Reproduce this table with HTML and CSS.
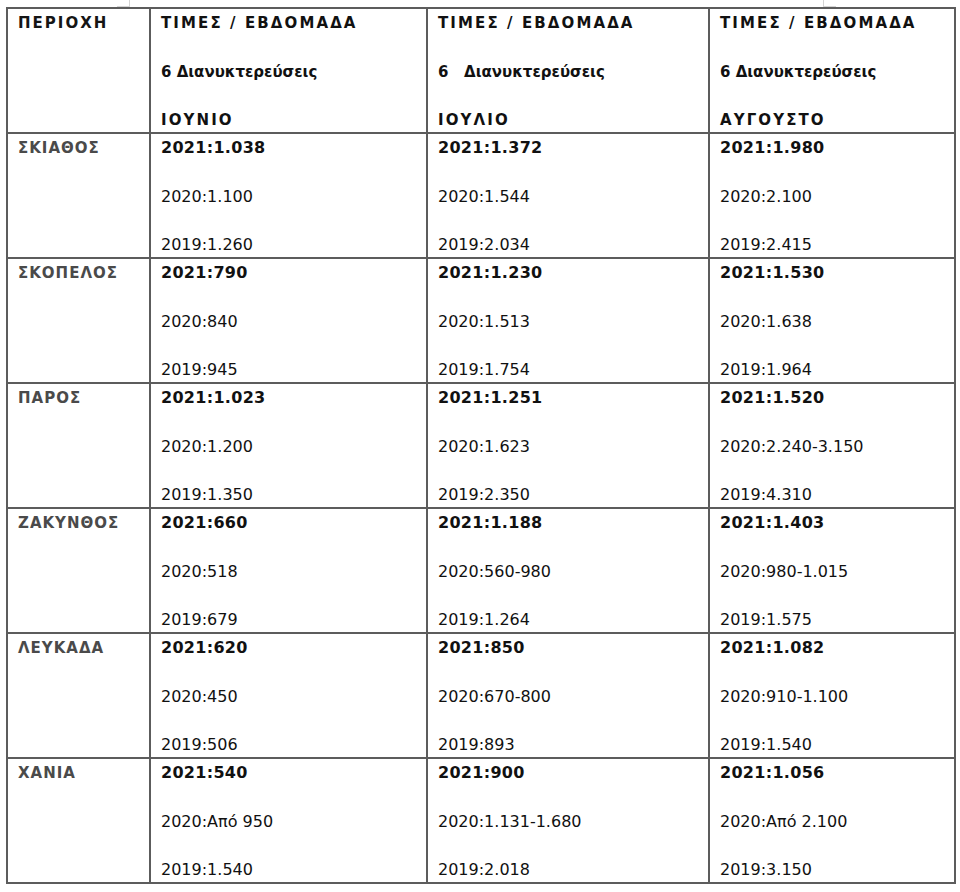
FILE: index.html
```html
<!DOCTYPE html>
<html lang="el">
<head>
<meta charset="utf-8">
<title>Τιμές ανά εβδομάδα</title>
<link rel="stylesheet" href="styles.css">
</head>
<body>
<div class="page">
  <span class="mark mark-left"></span>
  <span class="mark mark-right"></span>
  <table class="prices">
    <colgroup>
      <col class="c-area">
      <col class="c-jun">
      <col class="c-jul">
      <col class="c-aug">
    </colgroup>
    <thead>
      <tr>
        <th class="area head-area"><div class="ln">ΠΕΡΙΟΧΗ</div></th>
        <th><div class="ln caps">ΤΙΜΕΣ / ΕΒΔΟΜΑΔΑ</div><div class="ln">6 Διανυκτερεύσεις</div><div class="ln caps">ΙΟΥΝΙΟ</div></th>
        <th><div class="ln caps">ΤΙΜΕΣ / ΕΒΔΟΜΑΔΑ</div><div class="ln">6&nbsp;&nbsp; Διανυκτερεύσεις</div><div class="ln caps">ΙΟΥΛΙΟ</div></th>
        <th><div class="ln caps">ΤΙΜΕΣ / ΕΒΔΟΜΑΔΑ</div><div class="ln">6 Διανυκτερεύσεις</div><div class="ln caps">ΑΥΓΟΥΣΤΟ</div></th>
      </tr>
    </thead>
    <tbody>
      <tr>
        <td class="area"><div class="ln">ΣΚΙΑΘΟΣ</div></td>
        <td><div class="ln now">2021:1.038</div><div class="ln">2020:1.100</div><div class="ln">2019:1.260</div></td>
        <td><div class="ln now">2021:1.372</div><div class="ln">2020:1.544</div><div class="ln">2019:2.034</div></td>
        <td><div class="ln now">2021:1.980</div><div class="ln">2020:2.100</div><div class="ln">2019:2.415</div></td>
      </tr>
      <tr>
        <td class="area"><div class="ln">ΣΚΟΠΕΛΟΣ</div></td>
        <td><div class="ln now">2021:790</div><div class="ln">2020:840</div><div class="ln">2019:945</div></td>
        <td><div class="ln now">2021:1.230</div><div class="ln">2020:1.513</div><div class="ln">2019:1.754</div></td>
        <td><div class="ln now">2021:1.530</div><div class="ln">2020:1.638</div><div class="ln">2019:1.964</div></td>
      </tr>
      <tr>
        <td class="area"><div class="ln">ΠΑΡΟΣ</div></td>
        <td><div class="ln now">2021:1.023</div><div class="ln">2020:1.200</div><div class="ln">2019:1.350</div></td>
        <td><div class="ln now">2021:1.251</div><div class="ln">2020:1.623</div><div class="ln">2019:2.350</div></td>
        <td><div class="ln now">2021:1.520</div><div class="ln">2020:2.240-3.150</div><div class="ln">2019:4.310</div></td>
      </tr>
      <tr>
        <td class="area"><div class="ln">ΖΑΚΥΝΘΟΣ</div></td>
        <td><div class="ln now">2021:660</div><div class="ln">2020:518</div><div class="ln">2019:679</div></td>
        <td><div class="ln now">2021:1.188</div><div class="ln">2020:560-980</div><div class="ln">2019:1.264</div></td>
        <td><div class="ln now">2021:1.403</div><div class="ln">2020:980-1.015</div><div class="ln">2019:1.575</div></td>
      </tr>
      <tr>
        <td class="area"><div class="ln">ΛΕΥΚΑΔΑ</div></td>
        <td><div class="ln now">2021:620</div><div class="ln">2020:450</div><div class="ln">2019:506</div></td>
        <td><div class="ln now">2021:850</div><div class="ln">2020:670-800</div><div class="ln">2019:893</div></td>
        <td><div class="ln now">2021:1.082</div><div class="ln">2020:910-1.100</div><div class="ln">2019:1.540</div></td>
      </tr>
      <tr>
        <td class="area"><div class="ln">ΧΑΝΙΑ</div></td>
        <td><div class="ln now">2021:540</div><div class="ln">2020:Από 950</div><div class="ln">2019:1.540</div></td>
        <td><div class="ln now">2021:900</div><div class="ln">2020:1.131-1.680</div><div class="ln">2019:2.018</div></td>
        <td><div class="ln now">2021:1.056</div><div class="ln">2020:Από 2.100</div><div class="ln">2019:3.150</div></td>
      </tr>
    </tbody>
  </table>
</div>
</body>
</html>
```

FILE: styles.css
```css
html, body {
  margin: 0;
  padding: 0;
  background: #ffffff;
}

body {
  font-family: "DejaVu Sans", "Noto Sans", sans-serif;
  font-size: 16px;
  color: #111111;
}

.page {
  position: relative;
  padding: 7px 0 0 6px;
}

.mark {
  position: absolute;
  top: 0;
  width: 12px;
  height: 6px;
  border-bottom: 1px solid #d4d4d4;
}

.mark-left {
  left: 117px;
  border-right: 1px solid #d4d4d4;
}

.mark-right {
  left: 823px;
  border-left: 1px solid #d4d4d4;
}

.prices {
  border-collapse: collapse;
  table-layout: fixed;
  width: 948px;
}

.c-area { width: 143px; }
.c-jun { width: 277px; }
.c-jul { width: 282px; }
.c-aug { width: 246px; }

.prices th,
.prices td {
  border: 2px solid #5c5c5c;
  padding: 2px 10px 0 10px;
  vertical-align: top;
  text-align: left;
  font-weight: normal;
}

.prices th {
  font-weight: bold;
  font-size: 15px;
}

.ln {
  line-height: 24px;
  height: 24px;
  white-space: nowrap;
}

.ln + .ln {
  margin-top: 24.5px;
}

.caps {
  letter-spacing: 2.1px;
}

.now {
  font-weight: bold;
  letter-spacing: 0.3px;
}

.area .ln {
  font-weight: bold;
  color: #4a4a4a;
  letter-spacing: 1px;
  font-size: 15px;
}

.head-area .ln {
  color: #151515;
  letter-spacing: 2px;
}
```
